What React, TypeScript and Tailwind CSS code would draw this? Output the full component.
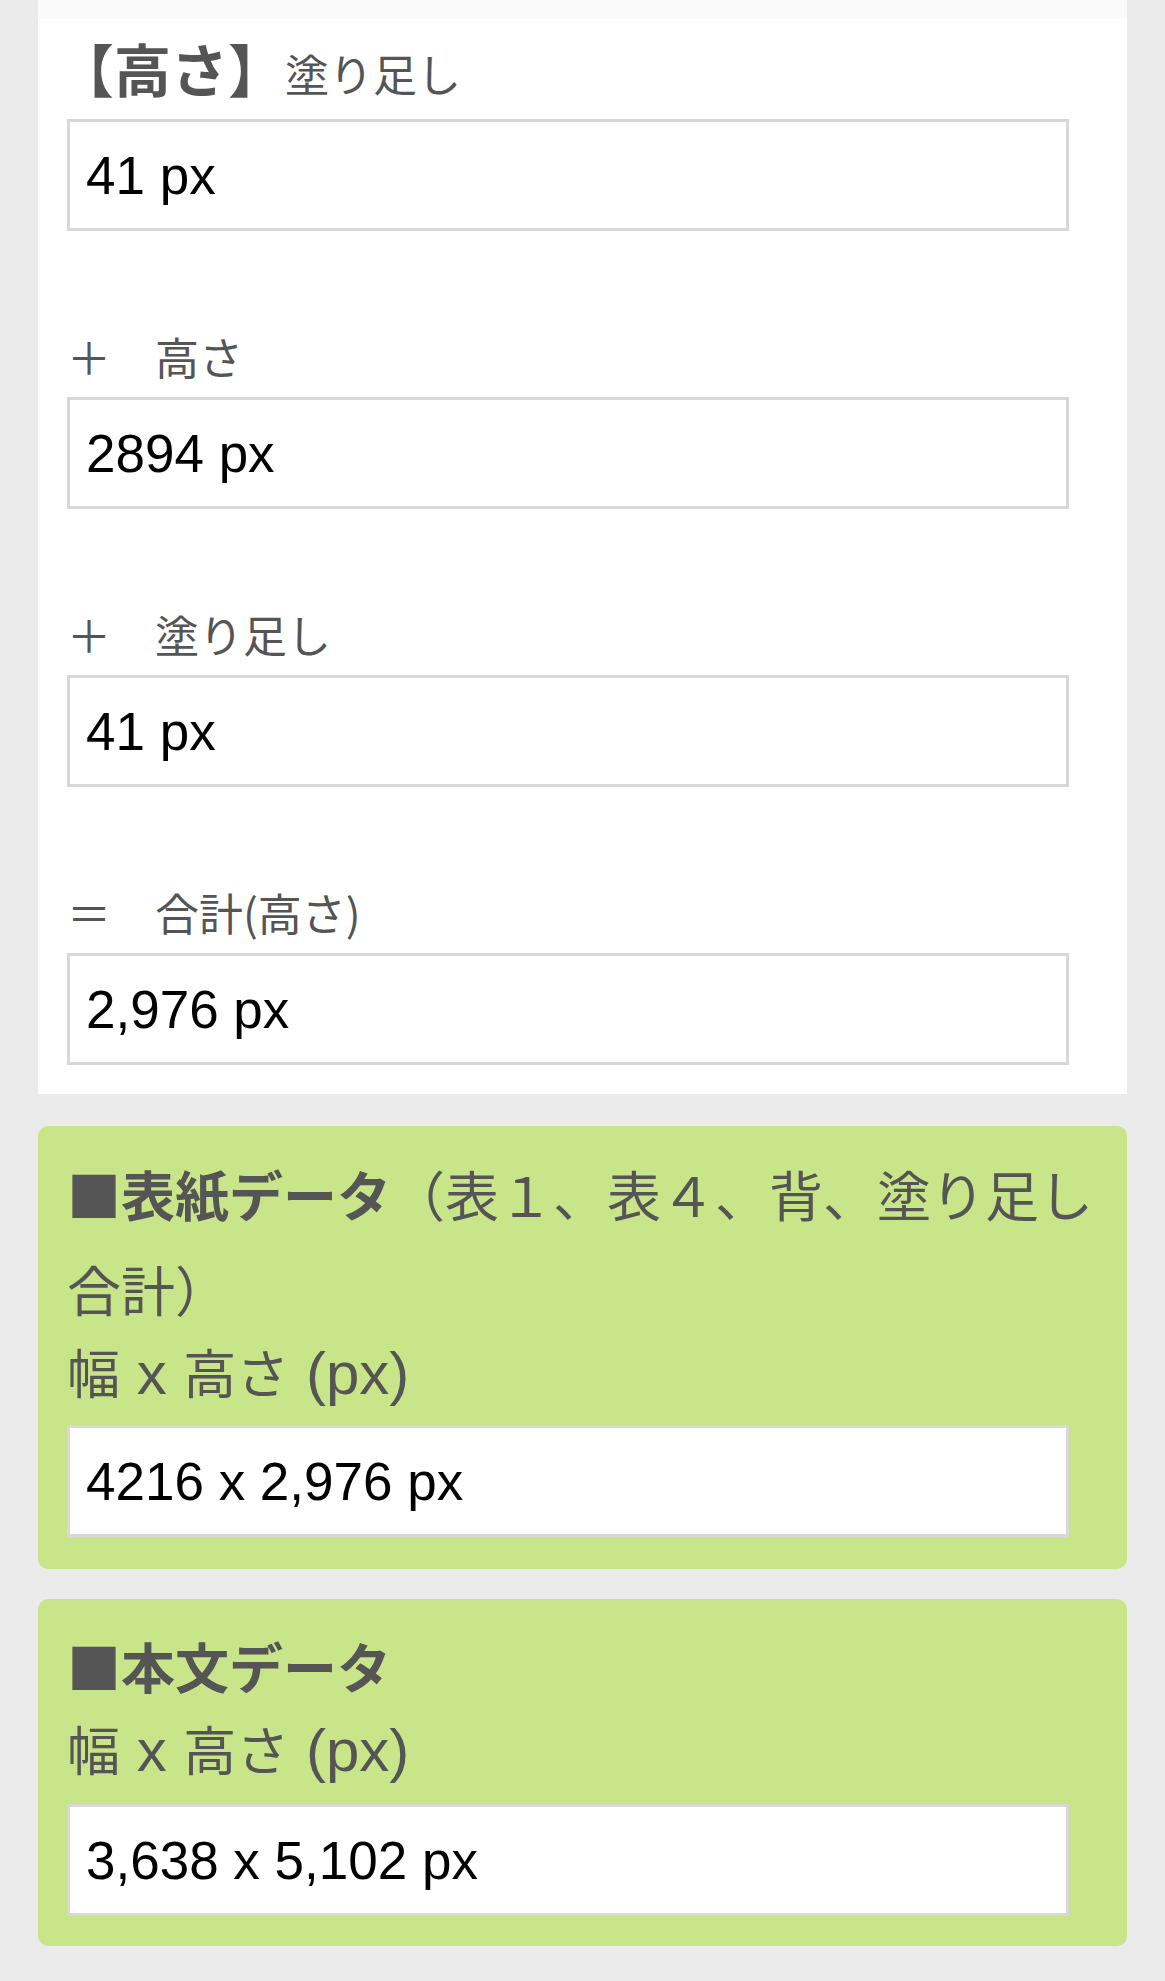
import React from 'react';

const FONT = '"Liberation Sans", "Noto Sans CJK JP", sans-serif';
const CJK = '"Noto Sans CJK JP", sans-serif';

const ValueBox: React.FC<{ value: string }> = ({ value }) => (
  <input
    readOnly
    value={value}
    className="block w-[1002px] h-[112px] border-[3px] border-[#d8d8d8] bg-white px-[16px] text-[53px] text-black outline-none"
  />
);

const Field: React.FC<{ op: string; label: string; value: string }> = ({ op, label, value }) => (
  <div className="mt-[93px]">
    <div className="h-[64px] text-[44px] leading-[64px] text-[#555] mb-[9px]" style={{ fontFamily: CJK }}>
      {op}　{label}
    </div>
    <ValueBox value={value} />
  </div>
);

// latin part of "幅 x 高さ (px)" runs wider on the reference
const SizeLabel: React.FC<{ className: string }> = ({ className }) => (
  <div className={`h-[81px] text-[53px] leading-[76px] ${className}`}>
    幅<span className="text-[60px]"> x </span>高さ<span className="text-[60px]"> (px)</span>
  </div>
);

export default function App() {
  return (
    <div className="min-h-[1981px] bg-[#ebebeb] px-[38px] pb-[33px]" style={{ fontFamily: FONT }}>
      <div className="bg-white">
        <div className="h-[19px] bg-[#fafafa]" />
        <div className="px-[29px] pt-[16px] pb-[29px]">
          <div className="flex items-baseline h-[64px] leading-[64px] text-[#555] mb-[20px]" style={{ fontFamily: CJK }}>
            <span className="text-[57px] font-bold -ml-[10px]">【高さ】</span>
            <span className="text-[44px]">塗り足し</span>
          </div>
          <ValueBox value="41 px" />

          <Field op="＋" label="高さ" value="2894 px" />
          <Field op="＋" label="塗り足し" value="41 px" />
          <Field op="＝" label="合計(高さ)" value="2,976 px" />
        </div>
      </div>

      <div className="mt-[32px] rounded-[10px] bg-[#c9e58a] px-[29px] pt-[20px] pb-[32px] text-[#555]">
        <div className="text-[54px] leading-[95px]" style={{ fontFamily: CJK }}>
          <span className="font-bold">■表紙データ</span>（表１、表４、背、塗り足し合計）
        </div>
        <SizeLabel className="mb-[8px]" />
        <ValueBox value="4216 x 2,976 px" />
      </div>

      <div className="mt-[30px] rounded-[10px] bg-[#c9e58a] px-[29px] pt-[19px] pb-[30px] text-[#555]">
        <div className="h-[95px] text-[54px] leading-[95px] font-bold" style={{ fontFamily: CJK }}>
          ■本文データ
        </div>
        <SizeLabel className="mb-[10px]" />
        <ValueBox value="3,638 x 5,102 px" />
      </div>
    </div>
  );
}
